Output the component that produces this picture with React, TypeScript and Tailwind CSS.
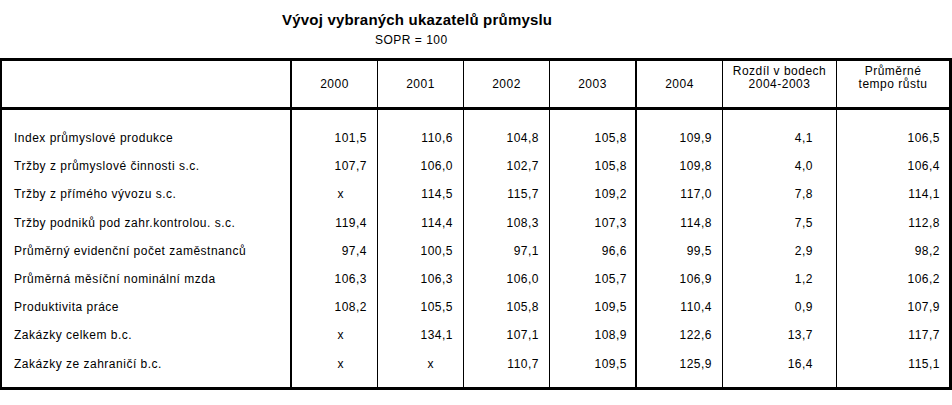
const rows: { label: string; values: string[] }[] = [
  { label: 'Index průmyslové produkce', values: ['101,5', '110,6', '104,8', '105,8', '109,9', '4,1', '106,5'] },
  { label: 'Tržby z průmyslové činnosti s.c.', values: ['107,7', '106,0', '102,7', '105,8', '109,8', '4,0', '106,4'] },
  { label: 'Tržby z přímého vývozu s.c.', values: ['x', '114,5', '115,7', '109,2', '117,0', '7,8', '114,1'] },
  { label: 'Tržby podniků pod zahr.kontrolou. s.c.', values: ['119,4', '114,4', '108,3', '107,3', '114,8', '7,5', '112,8'] },
  { label: 'Průměrný evidenční počet zaměstnanců', values: ['97,4', '100,5', '97,1', '96,6', '99,5', '2,9', '98,2'] },
  { label: 'Průměrná měsíční nominální mzda', values: ['106,3', '106,3', '106,0', '105,7', '106,9', '1,2', '106,2'] },
  { label: 'Produktivita práce', values: ['108,2', '105,5', '105,8', '109,5', '110,4', '0,9', '107,9'] },
  { label: 'Zakázky celkem b.c.', values: ['x', '134,1', '107,1', '108,9', '122,6', '13,7', '117,7'] },
  { label: 'Zakázky ze zahraničí b.c.', values: ['x', 'x', '110,7', '109,5', '125,9', '16,4', '115,1'] },
];

// each data column: border class and right padding for numbers / for "x"
const columns = [
  { head: ['2000'], border: 'border-r border-black', pad: 'pr-[10px]', xPad: 'pr-[33px]' },
  { head: ['2001'], border: 'border-r border-black', pad: 'pr-[10px]', xPad: 'pr-[29px]' },
  { head: ['2002'], border: 'border-r border-black', pad: 'pr-[10px]', xPad: 'pr-[30px]' },
  { head: ['2003'], border: 'border-r-2 border-black', pad: 'pr-[8px]', xPad: 'pr-[30px]' },
  { head: ['2004'], border: 'border-r border-black', pad: 'pr-[10px]', xPad: 'pr-[30px]' },
  { head: ['Rozdíl v bodech', '2004-2003'], border: 'border-r border-black', pad: 'pr-[23px]', xPad: 'pr-[30px]' },
  { head: ['Průměrné', 'tempo růstu'], border: '', pad: 'pr-[9px]', xPad: 'pr-[30px]' },
];

const gridCols = 'grid grid-cols-[290px_86px_86px_86px_87px_86px_114px_112px]';

export default function App() {
  return (
    <div
      className="h-[405px] w-[952px] bg-white text-[12px] tracking-[0.5px] text-black"
      style={{ fontFamily: '"Liberation Sans", Arial, sans-serif' }}
    >
      <div className="flex h-[58px] flex-col">
        <h1 className="ml-[282px] mt-[11px] text-[15px] font-bold leading-[18px] tracking-[0.2px]">
          Vývoj vybraných ukazatelů průmyslu
        </h1>
        <p className="ml-[375px] mt-[4px] leading-[14px]">SOPR = 100</p>
      </div>

      <div className="border-y-[3px] border-l-2 border-r-[3px] border-black">
        <div className={`${gridCols} h-[49px] border-b-[3px] border-black`}>
          <div className="border-r-2 border-black" />
          {columns.map((col, i) => (
            <div
              key={i}
              className={`flex flex-col items-center justify-end pb-[16px] text-center leading-[13px] ${col.border}`}
            >
              {col.head.map((line) => (
                <span key={line}>{line}</span>
              ))}
            </div>
          ))}
        </div>

        <div className={`${gridCols} h-[277px]`}>
          <div className="border-r-2 border-black pt-[14px]">
            {rows.map((row) => (
              <div key={row.label} className="flex h-[28.2px] items-center pl-[12px]">
                {row.label}
              </div>
            ))}
          </div>
          {columns.map((col, i) => (
            <div key={i} className={`pt-[14px] ${col.border}`}>
              {rows.map((row) => {
                const value = row.values[i];
                return (
                  <div
                    key={row.label}
                    className={`flex h-[28.2px] items-center justify-end ${value === 'x' ? col.xPad : col.pad}`}
                  >
                    {value}
                  </div>
                );
              })}
            </div>
          ))}
        </div>
      </div>
    </div>
  );
}
